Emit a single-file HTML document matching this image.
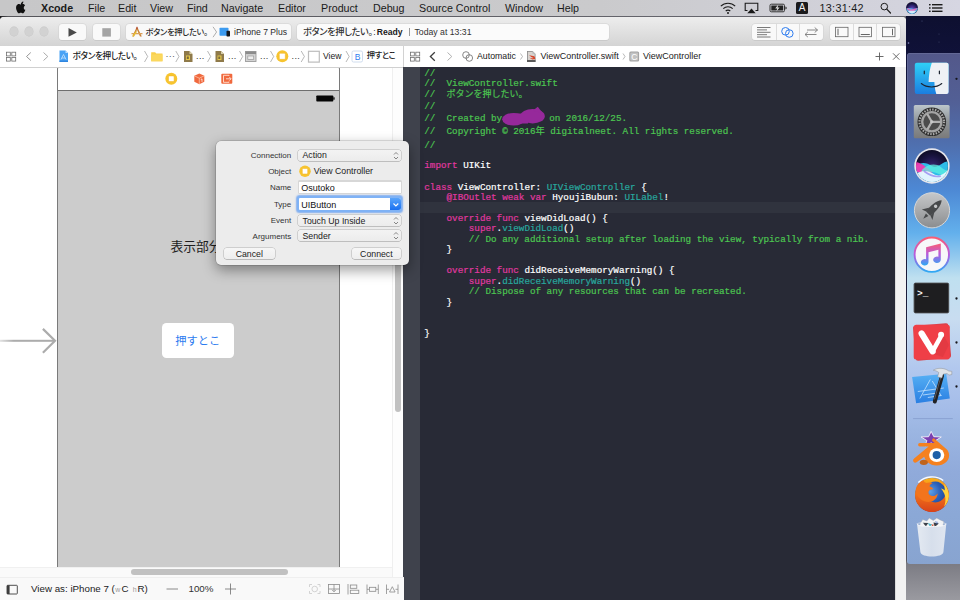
<!DOCTYPE html>
<html lang="ja"><head><meta charset="utf-8"><title>Xcode</title>
<style>
*{margin:0;padding:0;box-sizing:border-box}
html,body{width:960px;height:600px;overflow:hidden;background:#0e1030;font-family:"Liberation Sans","Noto Sans CJK JP",sans-serif;color:#222}
.abs,.abs>*,.tbtn>*{position:absolute}
svg{position:absolute;overflow:visible}
#desk{left:0;top:0;width:960px;height:600px;background:linear-gradient(#0d0f2c 0,#10123a 60px,#1b1c3a 300px,#55555c 560px,#7c7c84 564px,#9a9aa0 600px)}
#menubar{left:0;top:0;width:960px;height:16px;background:linear-gradient(90deg,#c7c7c8 0,#cacacc 600px,#d3d3dd 900px,#d6d6e2 960px);font-size:10.7px;line-height:16px;color:#1a1a1a;white-space:nowrap}
#menubar span{top:0}
#winshadow{left:0;top:16px;width:906px;height:5px;background:linear-gradient(90deg,#1a1a1c 0,#55555a 8px,#6a6a72 100%)}
#win{left:0;top:17px;width:906px;height:583px;background:#fff;border-radius:4px 4px 0 0;overflow:hidden}
#toolbar{left:0;top:0;width:906px;height:29.5px;background:linear-gradient(#ededed,#d4d4d4);border-bottom:1px solid #c2c2c2;font-size:9px;white-space:nowrap;color:#2a2a2a}
.tbtn{top:6.5px;height:16px;background:#f9f9f9;border-radius:3px;box-shadow:0 0 0 .5px #cfcfcf,0 .5px .5px #b0b0b0}
.jump{top:29px;height:21.5px;background:#fff;border-bottom:1px solid #d0d0d0;font-size:9px;line-height:20px;color:#222;white-space:nowrap}
.jump span{top:0}
.jp{letter-spacing:-.4px;font-size:8.7px;font-feature-settings:"palt" 1;font-weight:500}
.jpc{font-size:9px}
.chev{color:#9a9a9a}
#code{left:403.4px;top:50px;width:491.4px;height:533px;background:#282a36;font-family:"Liberation Mono","Noto Sans CJK JP",monospace;font-size:9.27px;color:#fff;white-space:pre;overflow:hidden;-webkit-text-stroke:.2px}
#code div.l{left:20.9px;height:11px;line-height:11px}
.c{color:#4cc551}.k{color:#e038a0}.t{color:#27a89e}.o{color:#27a89e}
#dlg{left:215.5px;top:140.5px;width:193.5px;height:124.5px;background:#ececec;border-radius:5px;box-shadow:0 0 0 .5px rgba(0,0,0,.22),0 5px 14px rgba(0,0,0,.4);font-size:8.75px;color:#222;white-space:nowrap}
#dlg .lab{right:117.75px;font-size:8px;text-align:right;height:11px;line-height:11px;color:#333}
.pop{left:82px;width:103.5px;height:10.5px;border-radius:2.5px;background:linear-gradient(#f3f3f3,#ececec);box-shadow:0 0 0 .5px #b2b2b2,0 .5px .5px #a8a8a8;line-height:10.5px;padding-left:5px}
.btn{top:107px;height:11.5px;border-radius:3px;background:linear-gradient(#f6f6f6,#eee);box-shadow:0 0 0 .5px #b0b0b0,0 .5px .5px #a0a0a0;line-height:13px;text-align:center}

</style></head><body>
<div id="desk" class="abs">
<svg width="960" height="600" style="left:0;top:0">
<g fill="#8f93c8"><circle cx="908.5" cy="43" r=".8"/><circle cx="922" cy="21" r=".5" fill="#555a86"/><circle cx="939" cy="34" r=".5" fill="#444870"/><circle cx="939" cy="42" r=".5" fill="#444870"/><circle cx="885" cy="17" r=".5" fill="#555a86"/></g>
</svg>
</div>
<div id="dock" class="abs" style="left:907.2px;top:53px;width:53px;height:510.8px;border-radius:3px 0 0 3px;background:linear-gradient(#53588a 0,#525f95 47px,#4f6fae 91px,#4d88d4 136px,#63b0ec 180px,#91c8ee 203px,#bfe0f0 225px,#c8dcf0 266px,#b2c8ee 315px,#a4bce8 357px,#9cb6e2 377px,#90aada 420px,#8ba8d6 462px,#88a4d0 511px);box-shadow:inset .5px .5px 0 rgba(255,255,255,.2)">
<svg width="53" height="511" style="left:0;top:0" viewBox="907.2 53 53 511">
<defs>
<linearGradient id="gF" x1="0" y1="0" x2="0" y2="1"><stop offset="0" stop-color="#2fd0f6"/><stop offset="1" stop-color="#1b7ee0"/></linearGradient>
<linearGradient id="gS" x1="0" y1="0" x2="0" y2="1"><stop offset="0" stop-color="#bcc6cb"/><stop offset=".5" stop-color="#8f9497"/><stop offset="1" stop-color="#7a7a7a"/></linearGradient>
<radialGradient id="gSiri" cx=".5" cy=".55" r=".6"><stop offset="0" stop-color="#3b2a7a"/><stop offset=".6" stop-color="#1a1440"/><stop offset="1" stop-color="#0b0a1e"/></radialGradient>
<linearGradient id="gL" x1="0" y1="0" x2="0" y2="1"><stop offset="0" stop-color="#c6c8ca"/><stop offset="1" stop-color="#8b8d8f"/></linearGradient>
<linearGradient id="gI" x1="0" y1="0" x2="0" y2="1"><stop offset="0" stop-color="#fb5c74"/><stop offset=".5" stop-color="#b55be0"/><stop offset="1" stop-color="#2fa9f3"/></linearGradient>
<linearGradient id="gX" x1="0" y1="0" x2="0" y2="1"><stop offset="0" stop-color="#56b0f4"/><stop offset="1" stop-color="#2a7fe2"/></linearGradient>
<radialGradient id="gFx" cx=".45" cy=".4" r=".6"><stop offset="0" stop-color="#5aa0e8"/><stop offset=".5" stop-color="#2a5fb8"/><stop offset="1" stop-color="#1b3f86"/></radialGradient>
<linearGradient id="gFo" x1="0" y1="0" x2="0" y2="1"><stop offset="0" stop-color="#f9b21a"/><stop offset=".5" stop-color="#f0701a"/><stop offset="1" stop-color="#d8431a"/></linearGradient>
<linearGradient id="gT" x1="0" y1="0" x2="1" y2="0"><stop offset="0" stop-color="#eef1f5"/><stop offset=".5" stop-color="#dfe5ee"/><stop offset="1" stop-color="#e9edf3"/></linearGradient>
</defs>
<!-- Finder -->
<g>
<rect x="915" y="62.7" width="33.8" height="31.3" rx="2" fill="url(#gF)"/>
<path d="M932 62.7h14.8a2 2 0 0 1 2 2v27.3a2 2 0 0 1-2 2H936.5c-1.3-4-1.8-8-1.9-12h-5.8c.2-7 1.2-13.5 3.2-19.3z" fill="#eef1f5"/>
<path d="M921.5 83.5c5.5 4.6 15 4.6 20.5 0" stroke="#1c2430" stroke-width="1.1" fill="none" stroke-linecap="round"/>
<rect x="923.9" y="70.5" width="1.2" height="3.8" rx=".6" fill="#1c2430"/><rect x="939" y="70.5" width="1.2" height="3.8" rx=".6" fill="#1c2430"/>
</g>
<circle cx="956.7" cy="78.8" r="1.15" fill="#16161c"/>
<!-- System Preferences -->
<g>
<rect x="914" y="105" width="35.8" height="33.3" rx="1.5" fill="url(#gS)"/>
<circle cx="932" cy="121.8" r="14.3" fill="#2c2c2c"/>
<circle cx="932" cy="121.8" r="12.3" fill="none" stroke="#a8a8a8" stroke-width="2.2" stroke-dasharray="1.5 1.26"/>
<circle cx="932" cy="121.8" r="9.6" fill="#4c4c4c" stroke="#a4a4a4" stroke-width="2.3"/>
<path d="M932 121.8h9M932 121.8l-4.5-7.8M932 121.8l-4.5 7.8" stroke="#b0b0b0" stroke-width="2.2"/>
<circle cx="932" cy="121.8" r="1.6" fill="#c8c8c8"/>
</g>
<!-- Siri -->
<g>
<circle cx="932.15" cy="166" r="17.7" fill="#e6e6ec"/>
<circle cx="932.15" cy="166" r="16" fill="url(#gSiri)"/>
<clipPath id="cSiri"><circle cx="932.15" cy="166" r="16"/></clipPath>
<g clip-path="url(#cSiri)">
<path d="M914 169C920 161 926 162 932 166S944 159 950 162V185H914z" fill="#2fc4f2" opacity=".95"/>
<path d="M914 162C920 161 926 167 933 172C926 175 920 173 914 171z" fill="#f03cb0" opacity=".95"/>
<path d="M922 170C928 164 936 163 941 167S947 171 950 170V176C944 178 938 172 932 172S926 174 922 176z" fill="#5ef0e0" opacity=".75"/>
<path d="M914 177C920 169 928 170 934 174S946 173 950 168V185H914z" fill="#eef8ff" opacity=".93"/>
<path d="M924 171C928 174 934 178 941 176" stroke="#8a7cf0" stroke-width="1.6" fill="none" opacity=".7"/>
</g>
</g>
<!-- Launchpad -->
<g>
<circle cx="932.2" cy="210.3" r="17.6" fill="url(#gL)" stroke="#d4d6d8" stroke-width="1"/>
<g transform="translate(932.3 209.8) rotate(45)" fill="#47494b">
<path d="M0 -13.5C3.6 -9.5 4.2 -2 3 5.5L-3 5.5C-4.2 -2 -3.6 -9.5 0 -13.5z"/>
<path d="M-3.2 0L-7.5 7L-3 5.3zM3.2 0L7.5 7L3 5.3z"/>
<path d="M-1.8 7L0 12.5L1.8 7z"/>
<circle cx="0" cy="-5" r="1.7" fill="#c4c6c8"/>
</g>
</g>
<!-- iTunes -->
<g>
<circle cx="932" cy="254.7" r="17.2" fill="#f7f7f9" stroke="url(#gI)" stroke-width="1.9"/>
<path d="M926.3 247.3L941 243.5V259.8a3.8 3.2 0 1 1-2.4-3V249.8L928.7 252.3V262.3a3.8 3.2 0 1 1-2.4-3z" fill="url(#gI)"/>
</g>
<!-- Terminal -->
<g>
<rect x="914.3" y="283.1" width="34.6" height="29.8" rx="1.3" fill="#1e1e20" stroke="#48484a" stroke-width=".9"/>
<text x="917.3" y="295.5" font-family="Liberation Mono,monospace" font-size="9.5" font-weight="bold" fill="#f4f4f4">&gt;_</text>
</g>
<circle cx="956.7" cy="298.5" r="1.15" fill="#16161c"/>
<!-- Vivaldi -->
<g>
<rect x="914.5" y="324.5" width="35.5" height="35" rx="2.5" fill="#d8434b" transform="rotate(-5 932 342)"/>
<rect x="913.9" y="324.7" width="36.1" height="34.9" rx="2.5" fill="#ef3f47"/>
<path d="M938 338l5-5 6 12-6 12-9-3z" fill="#d9363e" opacity=".55"/>
<path d="M921.8 333.5L932.8 351.3" stroke="#fff" stroke-width="6.2" stroke-linecap="round" fill="none"/>
<path d="M932.8 351.3L940.8 337" stroke="#fff" stroke-width="4.6" stroke-linecap="round" fill="none"/>
<circle cx="941.3" cy="334.8" r="3" fill="#fff"/>
</g>
<circle cx="956.7" cy="342.5" r="1.15" fill="#16161c"/>
<!-- Xcode -->
<g>
<path d="M912.3 377l34.1-3.2 3.6 24.6-33.7 4.8z" fill="url(#gX)"/>
<path d="M920 398.5l10.5-19M928 397.5l13.5-2M932.5 381l9 15M918 391.5l26-3.5M923 395l16-2.2" stroke="#d4ecff" stroke-width=".8" fill="none" opacity=".9"/>
<path d="M942.3 375.5l-7.3 26" stroke="#222224" stroke-width="4" stroke-linecap="round"/>
<path d="M941.3 376l-6.5 23" stroke="#5a5a5e" stroke-width="1" stroke-linecap="round"/>
<path d="M933.5 370.2c4.5-2.8 11-2.5 15.5.8l3 .3v3.3l-3 .5-1.5-1.5-4 .5-1.5 4-4.2-1.3 1.2-4.3c-1.5-1.3-3.5-1.9-5.5-2.3z" fill="#dfe3e7" stroke="#8a8e94" stroke-width=".5"/>
</g>
<circle cx="956.7" cy="386.5" r="1.15" fill="#16161c"/>
<!-- separator -->
<rect x="913.3" y="418.1" width="39.7" height="1" fill="#8aa2d2"/>
<!-- Blender -->
<g>
<path d="M931.4 431.4L934 436.7L941.5 437L935.7 440.6L937.6 446L931.4 442.9L925.2 446L927.1 440.6L921.3 437L928.8 436.7z" fill="#7a3fb0" stroke="#f4f0fa" stroke-width=".9"/>
<path d="M914.3 458.5l14.5-12h-8.8a1.7 1.7 0 0 1 0-3.4h14.8l-2-1.8a1.6 1.6 0 0 1 2.2-2.4l11.5 10c3.8 3.3 3.8 9.5 0 13-5.2 4.7-13.8 4.7-19 0-1.5-1.5-2.6-3.2-3-5.2l-7.7 5.6a1.9 1.9 0 0 1-2.5-3.8z" fill="#f5811f"/>
<ellipse cx="936.9" cy="455.1" rx="7.6" ry="6.8" fill="#fff"/>
<circle cx="936.9" cy="455.1" r="4.1" fill="#1d5fa8"/>
<ellipse cx="924" cy="462.3" rx="4" ry="2.6" fill="#c0641c"/>
</g>
<!-- Firefox -->
<g>
<circle cx="932.2" cy="495" r="16.8" fill="url(#gFx)"/>
<path fill-rule="evenodd" d="M932.2 478a17 17 0 1 0 .01 0zM935.5 481.5a10.5 10.5 0 1 1-.01 0z" fill="url(#gFo)"/>
<path d="M916 489c1-4 4-7.5 7.5-9 .5 1.5 1.5 2.5 3 3 2-.8 4.5-.8 6.5 0-2 .8-3 2-3.3 3.5 1.8.3 3.3 1.3 4 2.8-2.2-.3-4 .5-4.8 2-.8 1.8.3 3.8 2.5 4.5 2.5.8 5-.3 6.5-2.3-.3 4.3-3.5 7.8-7.8 8.3-6 .7-11.5-3-13.5-8.3-.6-1.5-.8-3-.6-4.5z" fill="#f2741c"/>
<path d="M944.5 484c3 3.5 4.8 8 4.5 12.5-.3 4-2 7.5-4.8 10 1.5-3.5 1.8-7 1-10.5-.7-3-2.2-5.5-4.2-7.5 1.7.3 3 1 4 2-.1-2.3-.3-4.5-.5-6.5z" fill="#ffd23a"/>
<path d="M918.5 482.5c6.5-6.5 17.5-7.5 25-2" stroke="#fff" stroke-width="1.3" fill="none" opacity=".95"/>
</g>
<!-- Trash -->
<g>
<path d="M920 524l3-4.5 4 1.5 2.5-3 4 2.5 3.5-2.5 3.5 2 3.5 1.5-1 5h-22z" fill="#f2f3f5" stroke="#9aa0a8" stroke-width=".4"/>
<path d="M923 522.5l3 4 2.5-3.5zM933.5 522l1.5 5 4-3.5z" fill="#3c4048"/>
<path d="M928 523l2 3.5 2.5-2z" fill="#4fb6c8"/><path d="M935 521.5l2 2.5 1.5-2z" fill="#3a62c0"/><path d="M931.5 524.5l1.5 2.5 1-2.5z" fill="#d85a3a"/>
<path d="M917.2 523.8C918 527.5 945.7 527.5 946.5 523.8L943.6 552C943.2 558 921.2 558 920.6 552z" fill="url(#gT)" opacity=".9"/>
<path d="M917.2 523.8C918 527.5 945.7 527.5 946.5 523.8" fill="none" stroke="#fafbfc" stroke-width=".9"/>
<path d="M917.3 524C917.5 521.8 946.2 521.8 946.4 524" fill="none" stroke="#eef0f3" stroke-width=".7" opacity=".9"/>
</g>
</svg>
</div>

<div id="menubar" class="abs">
<svg width="14" height="14" style="left:14px;top:1px" viewBox="0 0 14 14"><path d="M9.3 1c.1 1-.3 1.9-.9 2.5-.6.7-1.5 1.1-2.3 1-.1-.9.4-1.9.9-2.4C7.6 1.5 8.6 1 9.3 1zM11.8 9.8c-.3.8-.5 1.1-.9 1.8-.6.9-1.4 2-2.4 2-.9 0-1.1-.6-2.3-.6-1.2 0-1.5.6-2.4.6-1 0-1.7-1-2.3-1.9C0 9.5-.2 6.8.8 5.4c.7-1 1.8-1.6 2.8-1.6 1.1 0 1.7.6 2.6.6.9 0 1.4-.6 2.6-.6.9 0 1.9.5 2.6 1.4-2.3 1.3-1.9 4.5.4 4.6z" fill="#111" transform="translate(1.9 -.55) scale(.8 .95)"/></svg>
<span style="left:41px;font-weight:bold">Xcode</span><span style="left:88px">File</span><span style="left:118px">Edit</span><span style="left:150px">View</span><span style="left:187px">Find</span><span style="left:221px">Navigate</span><span style="left:278px">Editor</span><span style="left:321px">Product</span><span style="left:373px">Debug</span><span style="left:419px">Source Control</span><span style="left:505px">Window</span><span style="left:557px">Help</span>
<svg width="18" height="14" style="left:719px;top:1px" viewBox="0 0 18 14"><g fill="none" stroke="#1a1a1a" stroke-width="1.1" stroke-linecap="butt"><path d="M1.8 5.2a10.2 10.2 0 0 1 14.4 0"/><path d="M4.3 7.7a6.6 6.6 0 0 1 9.4 0"/><path d="M6.7 10.1a3.2 3.2 0 0 1 4.6 0"/></g><circle cx="9" cy="12" r="1" fill="#1a1a1a"/></svg>
<svg width="16" height="14" style="left:744px;top:1px" viewBox="0 0 16 14"><path d="M3.5 9.5H1.2V2.2h12.6v7.3H11.5" fill="none" stroke="#1a1a1a" stroke-width="1.1"/><path d="M7.5 7.5l4.2 4.8H3.3z" fill="#1a1a1a"/></svg>
<svg width="20" height="14" style="left:769px;top:1px" viewBox="0 0 20 14"><rect x="1" y="3.2" width="14.5" height="7.6" rx="1.3" fill="none" stroke="#333" stroke-width="1"/><rect x="2.3" y="4.5" width="11.9" height="5" fill="#222"/><path d="M16.4 5.5v3c.9-.2 1.3-.8 1.3-1.5s-.4-1.3-1.3-1.5z" fill="#333"/><path d="M9.3 3.5L6.2 7.4h2l-.9 3.2 3.3-4.1h-2z" fill="#ddd"/></svg>
<div style="left:796px;top:2px;width:12px;height:12px;background:#1b1b1d;border-radius:1.5px;color:#f2f2f2;font-size:10px;line-height:12px;text-align:center">A</div>
<span style="left:819.5px;font-size:10.8px;letter-spacing:.3px">13:31:42</span>
<svg width="14" height="14" style="left:879px;top:1px" viewBox="0 0 14 14"><circle cx="5.3" cy="5.6" r="3.3" fill="none" stroke="#1a1a1a" stroke-width="1"/><path d="M7.8 8.1l3.7 3.9" stroke="#1a1a1a" stroke-width="1.2" stroke-linecap="round"/></svg>
<svg width="14" height="14" style="left:905px;top:1px" viewBox="0 0 14 14"><defs><radialGradient id="gSm" cx=".5" cy=".6" r=".6"><stop offset="0" stop-color="#6a4fd0"/><stop offset=".7" stop-color="#1d1650"/><stop offset="1" stop-color="#0c0a22"/></radialGradient></defs><circle cx="7" cy="7" r="6" fill="url(#gSm)"/><path d="M1.3 7.5c2-1 3.5-.5 5.5 0s3.5 0 6-.8c-.2 3-2.5 6.2-5.8 6.2S1.7 10 1.3 7.5z" fill="#58c8f0" opacity=".9"/><path d="M1.5 7c2 0 3 1.5 5 1.5s3.5-1.5 6-1.2c-1 1.8-3 3-5.7 3S2.5 9 1.5 7z" fill="#f060b8" opacity=".85"/><path d="M3 10c2-.5 5-.5 8 0-1 1.5-2.5 2.5-4 2.5S4 11.5 3 10z" fill="#e8f4ff" opacity=".85"/></svg>
<svg width="16" height="14" style="left:928px;top:1px" viewBox="0 0 16 14"><g fill="#1a1a1a"><rect x="1" y="3" width="1.6" height="1.4"/><rect x="4" y="3" width="10.5" height="1.4"/><rect x="1" y="6.3" width="1.6" height="1.4"/><rect x="4" y="6.3" width="10.5" height="1.4"/><rect x="1" y="9.6" width="1.6" height="1.4"/><rect x="4" y="9.6" width="10.5" height="1.4"/></g></svg>
</div>
<div id="winshadow" class="abs"></div>
<div id="win" class="abs"></div>

<div id="toolbar" class="abs" style="top:17.2px;border-radius:4px 4px 0 0">
<div style="left:10px;top:10.3px;width:8.4px;height:8.4px;border-radius:50%;background:#d2d2d2;box-shadow:0 0 0 .4px #c2c2c2"></div>
<div style="left:25.1px;top:10.3px;width:8.4px;height:8.4px;border-radius:50%;background:#d2d2d2;box-shadow:0 0 0 .4px #c2c2c2"></div>
<div style="left:40.1px;top:10.3px;width:8.4px;height:8.4px;border-radius:50%;background:#d2d2d2;box-shadow:0 0 0 .4px #c2c2c2"></div>
<div class="tbtn" style="left:59px;width:27px"><svg width="27" height="17" viewBox="0 0 27 17" style="left:0;top:0"><path d="M9.5 4l8.3 4.4-8.3 4.4z" fill="#4a4a4a"/></svg></div>
<div class="tbtn" style="left:92.5px;width:27.5px"><svg width="27" height="17" viewBox="0 0 27 17" style="left:0;top:0"><rect x="9.3" y="4.2" width="8.6" height="8.4" fill="#a4a4a4"/></svg></div>
<div class="tbtn" style="left:126px;width:164.5px">
 <svg width="14" height="14" viewBox="0 0 14 14" style="left:4px;top:1.5px"><path d="M7 1.5L2.2 11.5h1.8L7 4.8l3 6.7h1.8z" fill="#c8823a"/><path d="M1.5 8h11v1.3h-11z" fill="#d9a05a"/><path d="M2.5 11l3.5-5 1 .8-3.5 5z" fill="#e8c12a"/><path d="M7 1.5l1.2 2.2H5.8z" fill="#b34a3a"/></svg>
 <span class="jp" style="left:19.5px;top:0;font-size:8.25px;letter-spacing:-.33px;line-height:17px">ボタンを押したい。</span>
 <svg width="6" height="12" viewBox="0 0 6 12" style="left:85.5px;top:2.5px"><path d="M1 .8l3.6 5.2L1 11.2" fill="none" stroke="#9a9a9a" stroke-width=".8"/></svg>
 <svg width="12" height="10" viewBox="0 0 12 10" style="left:92.5px;top:3.5px"><rect x=".5" y=".8" width="9" height="8" rx=".8" fill="#3c9bf0"/><rect x="7.5" y="3.8" width="3.5" height="5.7" rx=".7" fill="#15171c"/></svg>
 <span style="left:108px;top:0;line-height:17px;font-size:8.6px">iPhone 7 Plus</span>
</div>
<div class="tbtn" style="left:297px;width:312px;background:#fbfbfb">
 <span class="jp" style="left:6px;top:0;font-size:9.25px;letter-spacing:-.38px;line-height:17px;color:#333">ボタンを押したい。</span>
 <span style="left:76.3px;top:0;line-height:17px;color:#333;font-size:8.7px">:</span><span style="left:79.7px;top:0;line-height:17px;font-size:8.6px"><b style="color:#1c1c1c">Ready</b></span>
 <div style="left:111.5px;top:4px;width:.6px;height:8.5px;background:#9a9a9a"></div>
 <span style="left:117.5px;top:0;line-height:17px;color:#333;font-size:8.7px">Today at 13:31</span>
</div>
<div class="tbtn" style="left:752px;width:70.5px">
 <div style="left:23.5px;top:0;width:.6px;height:16px;background:#dcdcdc"></div><div style="left:47px;top:0;width:.6px;height:16px;background:#dcdcdc"></div>
 <svg width="70" height="17" viewBox="0 0 70 17" style="left:0;top:0">
  <g stroke="#6a6a6a" stroke-width=".9"><path d="M5 4.5h13.5M5 6.9h10M5 9.3h13.5M5 11.7h10M5 14h13.5" transform="translate(0 -1)"/></g>
  <g fill="none" stroke="#2d7cf0" stroke-width="1"><circle cx="33.5" cy="7.3" r="3.8"/><circle cx="37.3" cy="9.5" r="3.8"/></g>
  <g fill="none" stroke="#7a7a7a" stroke-width=".9"><path d="M53 10.5h11.5M53 10.5l2.8-2.5M53 10.5l2.8 2.5"/><path d="M55 6h10.5M65.5 6l-2.8-2.5M65.5 6l-2.8 2.5"/></g>
 </svg>
</div>
<div class="tbtn" style="left:829.5px;width:70px">
 <div style="left:23.5px;top:0;width:.6px;height:16px;background:#dcdcdc"></div><div style="left:46.8px;top:0;width:.6px;height:16px;background:#dcdcdc"></div>
 <svg width="70" height="17" viewBox="0 0 70 17" style="left:0;top:0">
  <g fill="none" stroke="#666" stroke-width=".8"><rect x="5.5" y="3.3" width="12.5" height="9.4"/><rect x="29" y="3.3" width="12.5" height="9.4"/><rect x="52.5" y="3.3" width="12.5" height="9.4"/></g>
  <g stroke="#666" stroke-width="1"><path d="M8 4.8v6.4"/><path d="M30.8 10.5h9"/><path d="M62.5 4.8v6.4"/></g>
 </svg>
</div>
</div>

<div class="jump abs" style="left:0;top:46px;width:404px">
 <svg width="404" height="21" viewBox="0 46 404 21" style="left:0;top:0">
  <g fill="none" stroke="#6e6e6e" stroke-width=".8"><rect x="6.4" y="52.2" width="3.9" height="3.7"/><rect x="11.8" y="52.2" width="3.9" height="3.7"/><rect x="6.4" y="57.4" width="3.9" height="3.7"/><rect x="11.8" y="57.4" width="3.9" height="3.7"/></g>
  <path d="M30.8 52.5l-4.3 4 4.3 4" fill="none" stroke="#8a8a8a" stroke-width=".9"/>
  <path d="M43.5 52.5l4.3 4-4.3 4" fill="none" stroke="#a0a0a0" stroke-width=".9"/>
  <path d="M59.5 50.5h6l2.5 2.5v9h-8.5z" fill="#4aa3f5"/><path d="M65.5 50.5l2.5 2.5h-2.5z" fill="#bfe0ff"/><path d="M61 59.5l2.5-5 2.5 5M61.8 58h3.4" stroke="#d8ecff" stroke-width=".7" fill="none"/><rect x="59.5" y="60.5" width="8.5" height="1.5" fill="#2f86e0"/>
  <g fill="none" stroke="#9a9a9a" stroke-width=".7"><path d="M144.5 51l3.2 5.5-3.2 5.5"/><path d="M175.8 51l3.2 5.5-3.2 5.5"/><path d="M207.5 51l3.2 5.5-3.2 5.5"/><path d="M239.5 51l3.2 5.5-3.2 5.5"/><path d="M270.5 51l3.2 5.5-3.2 5.5"/><path d="M301.2 51l3.2 5.5-3.2 5.5"/><path d="M346 51l3.2 5.5-3.2 5.5"/></g>
  <path d="M151.2 52.3h4l1 1.2h6.3v7.8h-11.3z" fill="#fad04c"/><path d="M151.2 54.5h11.3v6.8h-11.3z" fill="#fbd85e"/>
  <g><path d="M184 51h5.5l3 3v8h-8.5z" fill="#8f7a4a"/><path d="M189.5 51l3 3h-3z" fill="#d9cfa8"/><rect x="186" y="55.5" width="4" height="4.5" fill="#e6c84a"/><rect x="186.8" y="56.5" width="2" height="2.5" fill="#7a6a3a"/></g>
  <g><path d="M215.5 51h5.5l3 3v8h-8.5z" fill="#8f7a4a"/><path d="M221 51l3 3h-3z" fill="#d9cfa8"/><rect x="217.5" y="55.5" width="4" height="4.5" fill="#e6c84a"/><rect x="218.3" y="56.5" width="2" height="2.5" fill="#7a6a3a"/></g>
  <g><rect x="245.5" y="51.5" width="10.5" height="10" fill="#d4d4d4" stroke="#9c9c9c" stroke-width=".9"/><rect x="245.5" y="51.5" width="10.5" height="2.6" fill="#8c8c8c"/><rect x="247.8" y="56" width="5.9" height="3.4" fill="#eee" stroke="#9a9a9a" stroke-width=".7"/></g>
  <circle cx="282.3" cy="56.3" r="6" fill="#f7c42f"/><rect x="279.3" y="53.3" width="6" height="6" rx=".9" fill="#fff" stroke="#f3b21e" stroke-width=".5"/>
  <rect x="308.5" y="51.3" width="10.8" height="10.8" fill="#fff" stroke="#bdbdbd" stroke-width="1.2"/>
  <rect x="352" y="51" width="10.5" height="11" rx="1.5" fill="#fff" stroke="#c4d4ea" stroke-width=".8"/>
  <text x="354.7" y="59.7" font-family="Liberation Sans,sans-serif" font-size="8.5" fill="#2d7cf0">B</text>
 </svg>
 <span class="jp" style="left:72.5px">ボタンを押したい。</span>
 <span style="left:165.5px;letter-spacing:.3px;color:#555;top:-.4px">···</span>
 <span style="left:196px;letter-spacing:.4px;color:#333">...</span>
 <span style="left:228px;letter-spacing:.4px;color:#333">...</span>
 <span style="left:260px;letter-spacing:.4px;color:#333">...</span>
 <span style="left:291.5px;letter-spacing:.4px;color:#333">...</span>
 <span style="left:323px;font-size:8.6px">View</span>
 <span class="jp" style="left:366.75px;font-size:8.25px;letter-spacing:-.35px">押すとこ</span>
</div>
<div class="abs" style="left:403.2px;top:46px;width:1px;height:21px;background:#d2d2d2;z-index:2"></div>
<div class="jump abs" style="left:404px;top:46px;width:502px">
 <svg width="502" height="21" viewBox="404 46 502 21" style="left:0;top:0">
  <g fill="none" stroke="#6e6e6e" stroke-width=".8"><rect x="410.4" y="52.2" width="3.9" height="3.7"/><rect x="415.8" y="52.2" width="3.9" height="3.7"/><rect x="410.4" y="57.4" width="3.9" height="3.7"/><rect x="415.8" y="57.4" width="3.9" height="3.7"/></g>
  <path d="M434.8 52.3l-4.4 4.2 4.4 4.2" fill="none" stroke="#3c3c3c" stroke-width="1.3"/>
  <path d="M447.5 52.5l4.3 4-4.3 4" fill="none" stroke="#a8a8a8" stroke-width=".9"/>
  <g fill="none" stroke="#6a6a6a" stroke-width=".8"><circle cx="466" cy="55" r="3.3"/><circle cx="469.3" cy="58" r="3.3"/></g>
  <g fill="none" stroke="#9a9a9a" stroke-width=".7"><path d="M520.5 53.5l2 3-2 3"/><path d="M623 53.5l2 3-2 3"/></g>
  <g><path d="M527 51h5.5l3 3v8h-8.5z" fill="#8a8a8a"/><path d="M527.8 51.8h4.4l2.5 2.5v6.9h-6.9z" fill="#d8d4d0"/><path d="M532.5 51l3 3h-3z" fill="#bdbdbd"/><path d="M529 55c1.5 1.5 3 2.5 4.5 3-1 .5-2.5.5-4-.5 1 1.5 3 2.5 5 1.5l.8.8c0-1.5-.3-2.5-1-3.5-1.5-.3-3.5-.5-5.3-1.3z" fill="#d8452a"/><rect x="527" y="60" width="8.5" height="2" fill="#5a5a5a"/></g>
  <rect x="629.3" y="51.5" width="9.8" height="10" rx="1.5" fill="#a2a2a2"/>
  <rect x="630.3" y="52.5" width="7.8" height="8" rx="1" fill="#c2c2c2"/>
  <text x="631.2" y="59.6" font-family="Liberation Sans,sans-serif" font-size="8.5" fill="#fff">C</text>
  <path d="M875.5 56.5h8M879.5 52.5v8" stroke="#5a5a5a" stroke-width=".9"/>
  <path d="M893 53.3l6.4 6.4M899.4 53.3l-6.4 6.4" stroke="#5a5a5a" stroke-width=".9"/>
 </svg>
 <span style="left:73px;font-size:8.75px">Automatic</span>
 <span style="left:136.5px">ViewController.swift</span>
 <span style="left:239px">ViewController</span>
</div>

<div id="canvas" class="abs" style="left:0;top:67.5px;width:404px;height:509.5px;background:#fff;overflow:hidden">
 <div style="left:57px;top:-1px;width:283px;height:500.5px;background:#ccc;border:1px solid #7a7a7a;border-bottom:none;border-radius:2px 2px 0 0"></div>
 <div style="left:58px;top:0;width:281px;height:23.5px;background:#fff;border-bottom:1px solid #6e6e6e;border-radius:1px 1px 0 0"></div>
 <svg width="404" height="510" viewBox="0 67 404 510" style="left:0;top:-.5px">
  <defs><linearGradient id="gArr" x1="0" y1="0" x2="1" y2="0"><stop offset="0" stop-color="#acacac" stop-opacity=".35"/><stop offset=".25" stop-color="#acacac"/></linearGradient></defs>
  <circle cx="171.3" cy="78.7" r="6" fill="#f7c42f"/><rect x="168.5" y="75.9" width="5.6" height="5.6" rx=".9" fill="#fff" stroke="#f3b21e" stroke-width=".5"/>
  <g><path d="M199.3 73.5l5 2.3v6l-5 2.5-5-2.5v-6z" fill="#f0693e"/><path d="M199.3 78.2v6M194.3 75.8l5 2.4 5-2.4" stroke="#ffd0b8" stroke-width=".7" fill="none"/><path d="M200.8 79.5l1.2-.6v3" stroke="#fff" stroke-width=".7" fill="none"/></g>
  <g><rect x="221.3" y="73.8" width="11" height="10" rx="1" fill="#f0693e"/><path d="M229 76v-.7h-5.5v7h5.5v-.7" fill="none" stroke="#ffe2d4" stroke-width=".9"/><path d="M226 78.8h5M229.3 77l1.8 1.8-1.8 1.8" fill="none" stroke="#ffe2d4" stroke-width=".9"/></g>
  <rect x="316.3" y="95.5" width="17" height="6" rx=".8" fill="#050505"/><rect x="333.3" y="97.3" width="1.3" height="2.4" fill="#050505"/>
  <rect x="0" y="339.8" width="54.5" height="2" fill="url(#gArr)"/>
  <path d="M42.9 328.9L55 340.8L42.9 352.7" fill="none" stroke="#acacac" stroke-width="2.2"/>
 </svg>
 <div style="left:170.5px;top:170.5px;font-size:12.75px;line-height:18px;color:#1e1e1e;white-space:nowrap">表示部分</div>
 <div style="left:162px;top:255.5px;width:71.5px;height:34.5px;background:#fff;border-radius:4.5px;color:#2d7cf0;font-size:11.25px;line-height:36.5px;text-align:center;white-space:nowrap">押すとこ</div>
 <div style="left:0;top:499.5px;width:404px;height:10px;background:#fafafa;border-top:.5px solid #f0f0f0"></div>
 <div style="left:130.5px;top:501.75px;width:157.5px;height:5.75px;border-radius:3px;background:#c1c1c1"></div>
 <div style="left:391.8px;top:0;width:12.2px;height:510px;background:#fdfdfd;border-left:1px solid #efefef"></div>
 <div style="left:394.8px;top:120px;width:6.1px;height:224px;border-radius:3.25px;background:#c1c1c1"></div>
</div>

<div id="code" class="abs" style="top:67.25px">
<div style="left:0;top:0;width:16.6px;height:533px;background:#3f424c"></div>
<div style="left:16.6px;top:135px;width:475px;height:10.5px;background:#30333e"></div>
<div class="l" style="top:.3px"><span class="c">//</span></div>
<div class="l" style="top:10.5px"><span class="c">//  ViewController.swift</span></div>
<div class="l" style="top:21.5px"><span class="c">//  <span class="jpc">ボタンを押したい。</span></span></div>
<div class="l" style="top:33.5px"><span class="c">//</span></div>
<div class="l" style="top:45.5px"><span class="c">//  Created by</span></div>
<div class="l" style="top:58.5px"><span class="c">//  Copyright © 2016年 digitalneet. All rights reserved.</span></div>
<div class="l" style="top:72.7px"><span class="c">//</span></div>
<div class="l" style="top:93px"><span class="k">import</span> UIKit</div>
<div class="l" style="top:114.25px"><span class="k">class</span> ViewController: <span class="t">UIViewController</span> {</div>
<div class="l" style="top:124.75px">    <span class="k">@IBOutlet</span> <span class="k">weak</span> <span class="k">var</span> HyoujiBubun: <span class="t">UILabel</span>!</div>
<div class="l" style="top:145.5px">    <span class="k">override</span> <span class="k">func</span> viewDidLoad() {</div>
<div class="l" style="top:156px">        <span class="k">super</span>.<span class="o">viewDidLoad</span>()</div>
<div class="l" style="top:166.5px">        <span class="c">// Do any additional setup after loading the view, typically from a nib.</span></div>
<div class="l" style="top:177px">    }</div>
<div class="l" style="top:198px">    <span class="k">override</span> <span class="k">func</span> didReceiveMemoryWarning() {</div>
<div class="l" style="top:208.5px">        <span class="k">super</span>.<span class="o">didReceiveMemoryWarning</span>()</div>
<div class="l" style="top:219px">        <span class="c">// Dispose of any resources that can be recreated.</span></div>
<div class="l" style="top:229.5px">    }</div>
<div class="l" style="top:261px">}</div>
<div class="l c" style="top:45.5px;left:145.8px">on 2016/12/25.</div>
<svg width="50" height="22" viewBox="500 104 50 22" style="left:96.6px;top:37px"><g fill="#96299b"><ellipse cx="513.5" cy="119.2" rx="11.3" ry="6.3"/><ellipse cx="532.6" cy="116.2" rx="12.2" ry="7.3"/><path d="M533 110.5l4.8-3.800 5 6.5z"/><rect x="513" y="113.5" width="15" height="10"/></g></svg>
</div>
<div class="abs" style="left:895px;top:67px;width:11px;height:533px;background:#f2f2f2;border-left:1px solid #dcdcdc"></div>
<div id="dlg" class="abs">
 <div class="lab" style="top:9.5px">Connection</div>
 <div class="lab" style="top:25.5px">Object</div>
 <div class="lab" style="top:41.5px">Name</div>
 <div class="lab" style="top:58.5px">Type</div>
 <div class="lab" style="top:74.75px">Event</div>
 <div class="lab" style="top:90px">Arguments</div>
 <div class="pop" style="top:9.5px">Action</div>
 <div class="val" style="left:98.25px;top:25.5px;height:11px;line-height:11px">View Controller</div>
 <div class="fld" style="left:83.75px;top:40.5px;width:101.5px;height:12.25px;background:#fff;box-shadow:0 0 0 .5px #c2c2c2,inset 0 .5px 0 #b0b0b0;line-height:14px;padding-left:2px;font-size:9px;color:#111">Osutoko</div>
 <div style="left:81.75px;top:55.25px;width:105px;height:16.5px;border-radius:3px;background:#7fb2f5;box-shadow:0 0 1.5px .5px rgba(90,150,240,.7)"></div>
 <div class="fld" style="left:83.5px;top:57.5px;width:101.75px;height:12px;background:#fff;line-height:15px;padding-left:2.25px;overflow:hidden;font-size:9px;color:#111;border-radius:1px 2.5px 2.5px 1px">UIButton</div>
 <div style="left:174.5px;top:57.5px;width:10.75px;height:12px;border-radius:0 2.5px 2.5px 0;background:linear-gradient(#5aa5fb,#1a70f0)"></div>
 <div class="pop" style="top:74.5px;line-height:12.3px">Touch Up Inside</div>
 <div class="pop" style="top:89.5px;line-height:12px">Sender</div>
 <div class="btn" style="left:8px;width:51.5px">Cancel</div>
 <div class="btn" style="left:136.25px;width:49.25px">Connect</div>
 <svg width="194" height="125" viewBox="0 0 194 125" style="left:0;top:0">
  <circle cx="89" cy="30.25" r="5.75" fill="#f7c42f"/><rect x="86.3" y="27.55" width="5.4" height="5.4" rx=".9" fill="#fff" stroke="#f3b21e" stroke-width=".5"/>
  <g fill="none" stroke="#6a6a6a" stroke-width=".8"><path d="M178 13.5l2-2 2 2M178 16l2 2 2-2"/><path d="M178 78.5l2-2 2 2M178 81l2 2 2-2"/><path d="M178 93.5l2-2 2 2M178 96l2 2 2-2"/></g>
  <path d="M177.5 62.5l2.4 2.4 2.4-2.4" fill="none" stroke="#fff" stroke-width="1.1"/>
 </svg>
</div>

<div id="bottom" class="abs" style="left:0;top:577px;width:404px;height:23px;background:#f9f9f9;border-top:.5px solid #efefef;font-size:9.75px;color:#222;white-space:nowrap">
 <svg width="404" height="23" viewBox="0 577 404 23" style="left:0;top:-1px">
  <rect x="7" y="585.3" width="10.3" height="8.7" rx=".7" fill="none" stroke="#3c3c3c" stroke-width=".9"/><rect x="7" y="585.3" width="2.6" height="8.7" fill="#3c3c3c"/>
  <path d="M166.5 589h11.5" stroke="#6e6e6e" stroke-width=".8"/>
  <path d="M225 589h11M230.5 583.5v11" stroke="#6e6e6e" stroke-width=".8"/>
  <g fill="none" stroke="#c9c9c9" stroke-width=".8"><path d="M309.5 587v-2.5h2.5M317.5 584.5h2.5v2.5M320 591v2.5h-2.5M312 593.5h-2.5v-2.5"/><circle cx="314.7" cy="589" r="2.8"/></g>
  <g fill="none" stroke="#8a8a8a" stroke-width=".8"><rect x="328.5" y="584.5" width="11" height="9"/><path d="M328.5 589h11M334 584.5v7M332 589.8l2 2 2-2"/></g>
  <g fill="none" stroke="#8a8a8a" stroke-width=".8"><path d="M348 584v10.5"/><rect x="350.3" y="585" width="6.5" height="3.3"/><rect x="350.3" y="590.2" width="8.5" height="3.3"/></g>
  <g fill="none" stroke="#8a8a8a" stroke-width=".8"><path d="M367 584.5v9.5M378.3 584.5v9.5M367 589.3h2.3M376 589.3h2.3"/><rect x="369.5" y="587.3" width="6.3" height="4"/></g>
  <g fill="none" stroke="#8a8a8a" stroke-width=".8"><path d="M386.5 584.5v9.5M398 584.5v9.5M386.5 589.3h2.5M395.5 589.3h2.5"/><path d="M389.5 592l2.8-5.3 2.8 5.3z"/></g>
 </svg>
 <span style="left:31px;top:4.75px;line-height:12px">View as: iPhone 7 (<span style="position:static;font-size:7px;color:#9a9a9a;margin:0 1px 0 .5px">w</span>C <span style="position:static;font-size:7px;color:#9a9a9a;margin:0 1px 0 1.5px">h</span>R)</span>
 <span style="left:188.5px;top:4.75px;line-height:12px;color:#333">100%</span>
</div>


</body></html>
